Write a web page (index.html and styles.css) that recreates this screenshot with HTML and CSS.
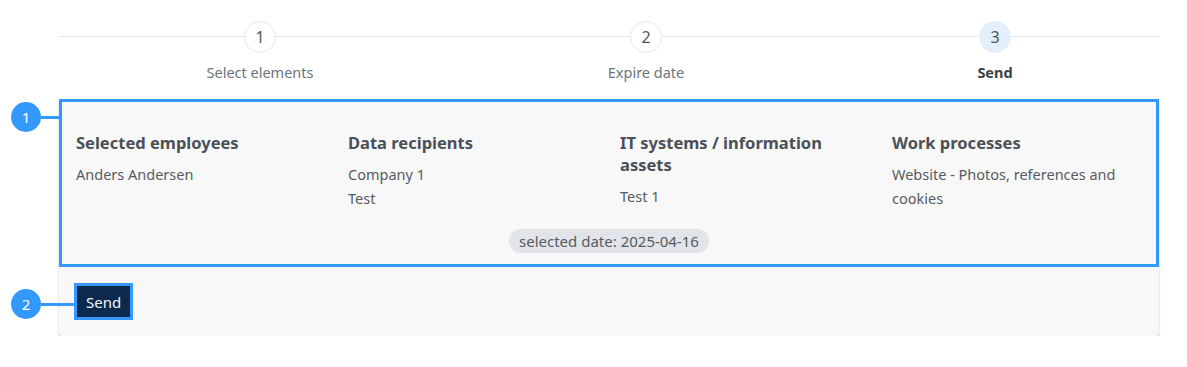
FILE: index.html
```html
<!DOCTYPE html>
<html>
<head>
<meta charset="utf-8">
<link rel="stylesheet" href="styles.css">
</head>
<body>
<div class="page">
  <div class="stepper">
    <div class="step">
      <div class="circle">1</div>
      <div class="label">Select elements</div>
    </div>
    <div class="step">
      <div class="circle">2</div>
      <div class="label">Expire date</div>
    </div>
    <div class="step active">
      <div class="circle">3</div>
      <div class="label">Send</div>
    </div>
  </div>

  <div class="card">
    <div class="card-body">
      <div class="cols">
        <div class="col">
          <h3>Selected employees</h3>
          <p>Anders Andersen</p>
        </div>
        <div class="col">
          <h3>Data recipients</h3>
          <p>Company 1<br>Test</p>
        </div>
        <div class="col">
          <h3>IT systems / information assets</h3>
          <p>Test 1</p>
        </div>
        <div class="col">
          <h3>Work processes</h3>
          <p>Website - Photos, references and cookies</p>
        </div>
      </div>
      <div class="pill-row"><span class="pill">selected date: 2025-04-16</span></div>
    </div>
    <div class="card-footer">
      <button class="btn">Send</button>
    </div>
    <div class="marker m1"><span class="dot">1</span><span class="wire"></span></div>
    <div class="marker m2"><span class="dot">2</span><span class="wire"></span></div>
  </div>
</div>
</body>
</html>
```

FILE: styles.css
```css
* { box-sizing: border-box; }
html, body { margin: 0; padding: 0; background: #fff; }
body {
  font-family: "Noto Sans", "Open Sans", sans-serif;
  color: #495057;
}
.page {
  width: 1100px;
  margin-left: 59px;
}
.stepper {
  display: grid;
  grid-template-columns: 402px 370px 328px;
  background: linear-gradient(#e3e5e8, #e3e5e8) no-repeat 0 36px / 100% 1px;
  padding-top: 21px;
}
.step {
  display: flex;
  flex-direction: column;
  align-items: center;
}
.circle {
  width: 32px;
  height: 32px;
  border-radius: 50%;
  border: 1px solid #e6e8eb;
  background: #fff;
  color: #555;
  font-size: 16px;
  line-height: 30px;
  text-align: center;
}
.step.active .circle {
  background: #e3f0fc;
  border-color: #e3f0fc;
}
.label {
  margin-top: 9px;
  font-size: 14.5px;
  line-height: 20px;
  color: #6c757d;
}
.step.active .label {
  font-weight: 700;
  color: #3a3f44;
}
.card {
  position: relative;
  margin-top: 17px;
  background: #f8f8f8;
  border-radius: 3px;
  box-shadow: 0 1px 2px rgba(0,0,0,0.3);
}
.card-body {
  outline: 3px solid #3399ff;
  outline-offset: -3px;
  padding: 33px 0 14px 17px;
}
.cols {
  display: grid;
  grid-template-columns: repeat(4, 272px);
}
.col { padding-right: 28px; }
.col h3 {
  margin: 0;
  font-size: 16.5px;
  line-height: 22px;
  font-weight: 700;
  color: #4a5056;
}
.col p {
  margin: 8px 0 0;
  font-size: 14.5px;
  line-height: 24px;
  color: #555b61;
}
.pill-row {
  margin-top: 19px;
  display: flex;
  justify-content: center;
  padding-right: 17px;
}
.pill {
  display: inline-block;
  height: 24px;
  line-height: 24px;
  padding: 0 10px;
  border-radius: 12px;
  background: #e1e4e8;
  color: #555b61;
  font-size: 15px;
}
.card-footer {
  padding: 19px 18px 19px;
}
.btn {
  display: block;
  height: 31px;
  padding: 0 9px;
  border: 0;
  background: #0c2a4d;
  color: #f2f6ff;
  font-family: inherit;
  font-size: 15px;
  outline: 3px solid #3399ff;
}
.marker {
  position: absolute;
  left: -48px;
  display: flex;
  align-items: center;
}
.m1 { top: 3px; }
.m2 { top: 190px; }
.dot {
  width: 30px;
  height: 30px;
  border-radius: 50%;
  background: #3399ff;
  color: #fff;
  font-size: 15px;
  line-height: 30px;
  text-align: center;
}
.wire {
  height: 3px;
  background: #3399ff;
}
.m1 .wire { width: 18px; }
.m2 .wire { width: 33px; }
```
